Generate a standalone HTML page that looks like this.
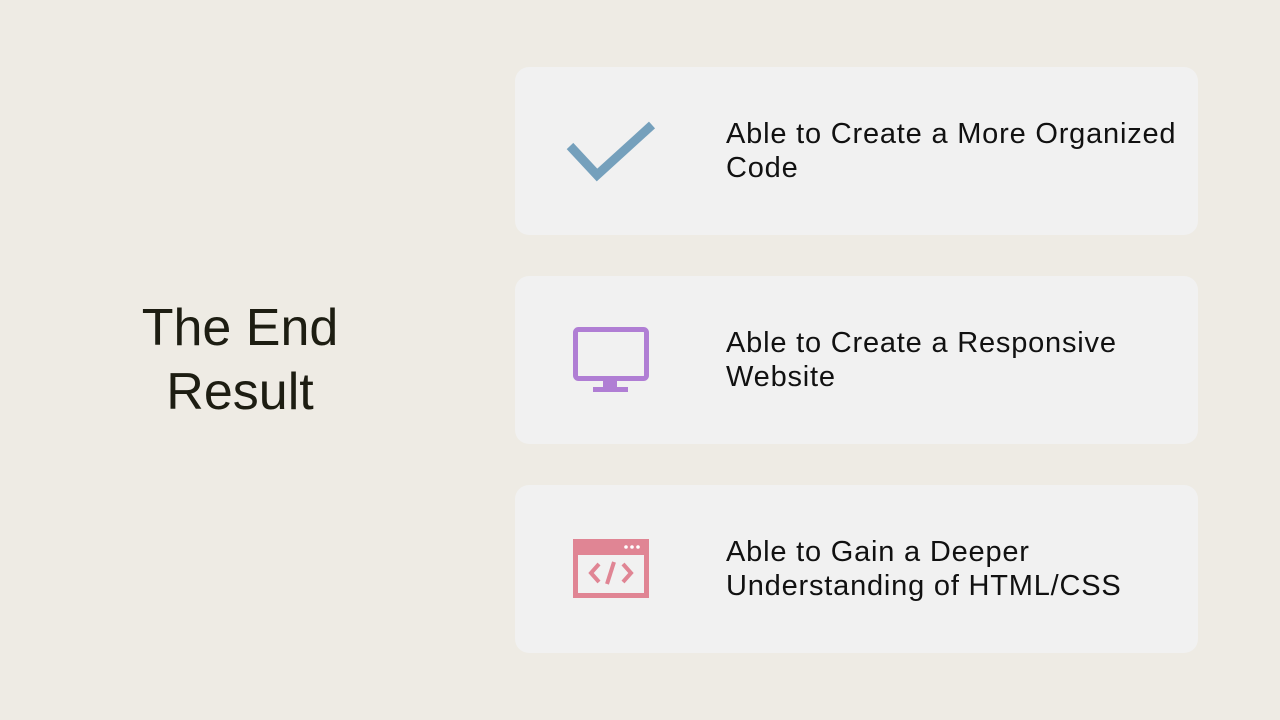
<!DOCTYPE html>
<html><head><style>
body{margin:0;width:1280px;height:720px;background:#eeebe4;font-family:"Liberation Sans",sans-serif;position:relative;overflow:hidden}
.t{position:absolute;left:80px;width:320px;top:296px;text-align:center;font-size:52px;line-height:64px;color:#1d1d12}
.c{position:absolute;left:515px;width:683px;height:168px;background:#f1f1f1;border-radius:14px}
.c p{position:absolute;left:211px;top:50px;margin:0;font-size:29px;line-height:34px;color:#111;letter-spacing:0.8px;white-space:nowrap}
.c svg{position:absolute;left:0;top:0}
</style></head><body>
<div class="t">The End<br>Result</div>
<div class="c" style="top:67px"><svg width="200" height="168"><polyline points="55,79 82,108 137,58" fill="none" stroke="#75a0bc" stroke-width="9"/></svg><p>Able to Create a More Organized<br>Code</p></div>
<div class="c" style="top:276px"><svg width="200" height="168"><rect x="60.5" y="53.5" width="71" height="49" rx="3" fill="none" stroke="#b07ed4" stroke-width="5"/><rect x="88" y="105" width="14" height="6" fill="#b07ed4"/><rect x="78" y="111" width="35" height="5" fill="#b07ed4"/></svg><p>Able to Create a Responsive<br>Website</p></div>
<div class="c" style="top:485px"><svg width="200" height="168"><rect x="60.5" y="56.5" width="71" height="54" fill="none" stroke="#e08594" stroke-width="5"/><rect x="58" y="54" width="76" height="16" fill="#e08594"/><circle cx="111" cy="62" r="1.8" fill="#fff"/><circle cx="117" cy="62" r="1.8" fill="#fff"/><circle cx="123" cy="62" r="1.8" fill="#fff"/><polyline points="84,79 76,88 84,97" fill="none" stroke="#e08594" stroke-width="4"/><polyline points="108,79 116,88 108,97" fill="none" stroke="#e08594" stroke-width="4"/><line x1="99" y1="77" x2="92" y2="99" stroke="#e08594" stroke-width="4"/></svg><p>Able to Gain a Deeper<br>Understanding of HTML/CSS</p></div>
</body></html>
